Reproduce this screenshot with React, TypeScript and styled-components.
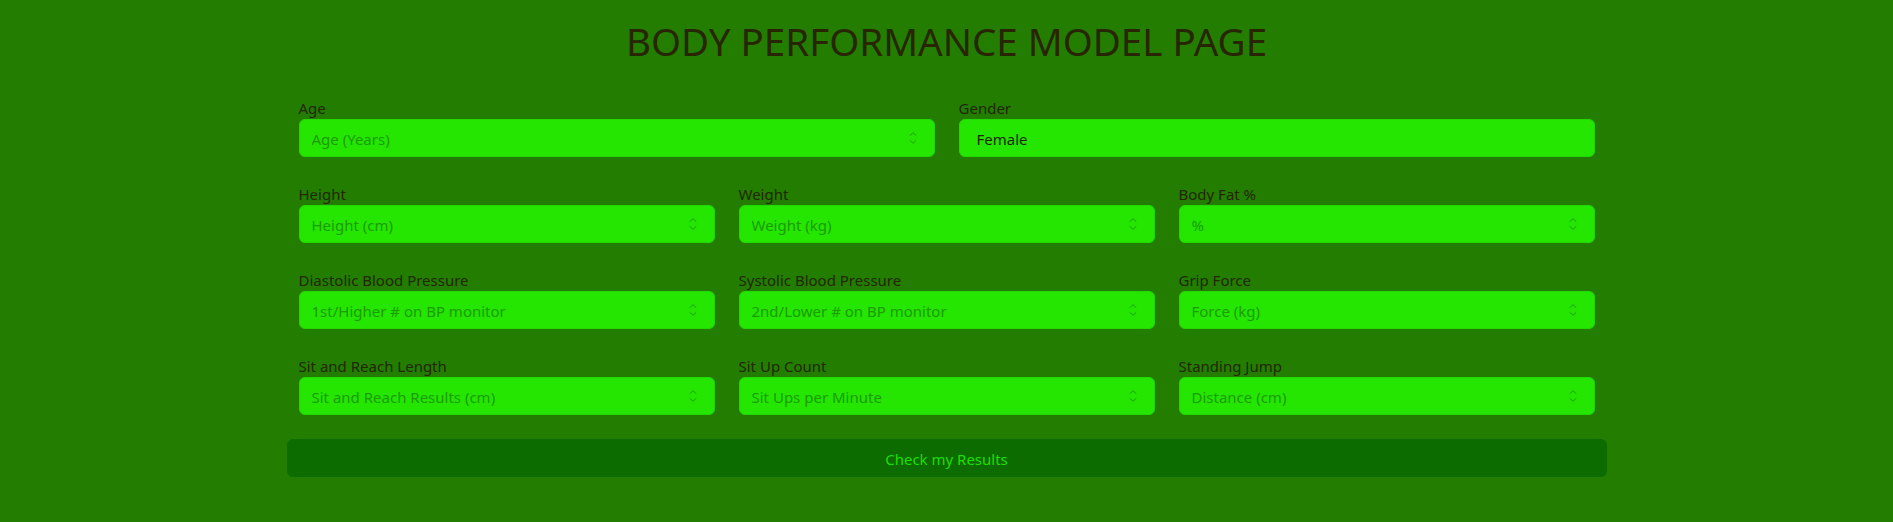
import React from "react";
import styled, { createGlobalStyle } from "styled-components";

const GlobalStyle = createGlobalStyle`
  html, body {
    margin: 0;
    padding: 0;
    background: #237d00;
  }
  body {
    font-family: "Noto Sans", "Open Sans", sans-serif;
    font-size: 15px;
    line-height: 1.5;
    color: #252800;
  }
  * { box-sizing: border-box; }
`;

const Page = styled.main`
  width: 1320px;
  margin: 0 auto;
  padding-top: 17px;
`;

const Title = styled.h1`
  margin: 0 0 30px;
  text-align: center;
  font-size: 38.5px;
  font-weight: 400;
  line-height: 48px;
  color: #272600;
`;

const Row = styled.div<{ $cols: number }>`
  display: grid;
  grid-template-columns: repeat(${(p) => p.$cols}, 1fr);
  column-gap: 24px;
  padding: 0 12px;
  margin-bottom: 24px;
`;

const Field = styled.div`
  display: flex;
  flex-direction: column;
`;

const Label = styled.label`
  display: block;
  height: 24px;
  padding-top: 2px;
  line-height: 22px;
  color: #222700;
`;

const InputWrap = styled.div`
  position: relative;
  height: 38px;
`;

const NumberInput = styled.input`
  width: 100%;
  height: 38px;
  padding: 7px 40px 5px 12px;
  font-family: inherit;
  font-size: 15px;
  line-height: 24px;
  color: #222700;
  background: #24e600;
  border: 1px solid #22d800;
  border-radius: 6px;
  outline: none;
  appearance: textfield;
  -moz-appearance: textfield;
  &::-webkit-inner-spin-button,
  &::-webkit-outer-spin-button {
    -webkit-appearance: none;
    margin: 0;
  }
  &::placeholder {
    color: #1b9c00;
    opacity: 1;
  }
`;

const Select = styled.select`
  width: 100%;
  height: 38px;
  padding: 7px 12px 5px 17px;
  font-family: inherit;
  font-size: 15px;
  line-height: 24px;
  color: #1f2600;
  background: #24e600;
  border: 1px solid #22d800;
  border-radius: 6px;
  outline: none;
  appearance: none;
  -webkit-appearance: none;
`;

const Spinner = styled.svg`
  position: absolute;
  right: 18px;
  top: 50%;
  width: 8px;
  height: 13px;
  transform: translateY(-50%);
  pointer-events: none;
`;

const SubmitButton = styled.button`
  display: block;
  width: 100%;
  height: 38px;
  margin-top: 0;
  padding: 7px 12px 5px;
  font-family: inherit;
  font-size: 15px;
  line-height: 24px;
  color: #22dd00;
  background: #0c6c00;
  border: 1px solid #0c6c00;
  border-radius: 6px;
  cursor: pointer;
`;

const SpinIcon = () => (
  <Spinner viewBox="0 0 8 13" fill="none" stroke="#1aa000" strokeWidth="1">
    <path d="M0.8 4.2 L4 1.2 L7.2 4.2" />
    <path d="M0.8 8.8 L4 11.8 L7.2 8.8" />
  </Spinner>
);

const NumField = ({ label, placeholder }: { label: string; placeholder: string }) => (
  <Field>
    <Label>{label}</Label>
    <InputWrap>
      <NumberInput type="number" placeholder={placeholder} />
      <SpinIcon />
    </InputWrap>
  </Field>
);

const rows: { label: string; placeholder: string }[][] = [
  [
    { label: "Height", placeholder: "Height (cm)" },
    { label: "Weight", placeholder: "Weight (kg)" },
    { label: "Body Fat %", placeholder: "%" },
  ],
  [
    { label: "Diastolic Blood Pressure", placeholder: "1st/Higher # on BP monitor" },
    { label: "Systolic Blood Pressure", placeholder: "2nd/Lower # on BP monitor" },
    { label: "Grip Force", placeholder: "Force (kg)" },
  ],
  [
    { label: "Sit and Reach Length", placeholder: "Sit and Reach Results (cm)" },
    { label: "Sit Up Count", placeholder: "Sit Ups per Minute" },
    { label: "Standing Jump", placeholder: "Distance (cm)" },
  ],
];

export default function App() {
  return (
    <>
      <GlobalStyle />
      <Page>
        <Title>BODY PERFORMANCE MODEL PAGE</Title>
        <form onSubmit={(e) => e.preventDefault()}>
          <Row $cols={2}>
            <NumField label="Age" placeholder="Age (Years)" />
            <Field>
              <Label>Gender</Label>
              <InputWrap>
                <Select defaultValue="female">
                  <option value="female">Female</option>
                  <option value="male">Male</option>
                </Select>
              </InputWrap>
            </Field>
          </Row>
          {rows.map((r, i) => (
            <Row $cols={3} key={i}>
              {r.map((f) => (
                <NumField key={f.label} label={f.label} placeholder={f.placeholder} />
              ))}
            </Row>
          ))}
          <SubmitButton type="submit">Check my Results</SubmitButton>
        </form>
      </Page>
    </>
  );
}
